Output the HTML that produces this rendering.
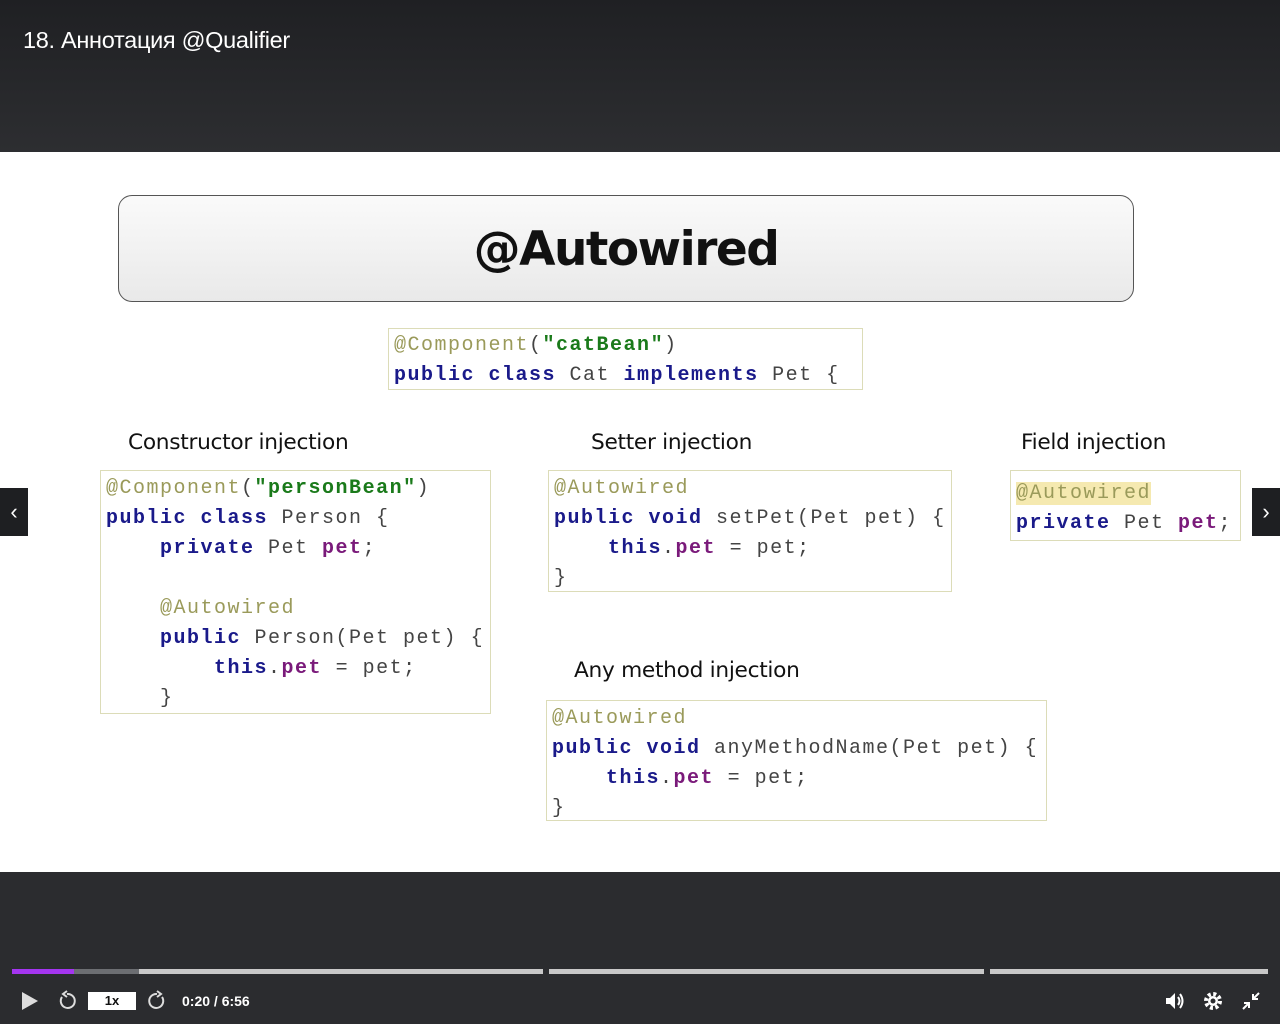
<!DOCTYPE html>
<html><head><meta charset="utf-8"><style>
*{margin:0;padding:0;box-sizing:border-box}
body{width:1280px;height:1024px;background:#2b2c2f;position:relative;overflow:hidden;font-family:"Liberation Sans",sans-serif}
.top{position:absolute;left:0;top:0;width:1280px;height:152px;background:linear-gradient(#1f2023,#2d2e31)}
.title{position:absolute;left:23px;top:27px;color:#fff;font-size:23.5px;letter-spacing:-0.3px;font-weight:normal}
.slide{position:absolute;left:0;top:152px;width:1280px;height:720px;background:#fff}
.hdr{position:absolute;left:118px;top:195px;width:1016px;height:107px;border:1.5px solid #555;border-radius:14px;background:linear-gradient(#fafafa,#e9e9e9);text-align:center;font:bold 47px/107px "DejaVu Sans","Liberation Sans",sans-serif;color:#111;letter-spacing:-1.5px}
.code{position:absolute;border:1.5px solid #dcdcb8;background:#fff;font-family:"Liberation Mono",monospace;font-size:20px;line-height:30px;letter-spacing:1.5px;color:#444;white-space:pre;padding:3px 0 0 5px}
.a{color:#9a9a5a}.k{color:#1a1a8a;font-weight:bold}.s{color:#1a7a1a;font-weight:bold}.p{color:#7a1a7a;font-weight:bold}
.lbl{position:absolute;color:#111;font-family:"DejaVu Sans","Liberation Sans",sans-serif;font-size:21.7px;letter-spacing:-0.3px}
.nav{position:absolute;top:488px;width:28px;height:48px;background:#1e1f22;color:#fff;font-size:22px;text-align:center;line-height:48px}
.bar{position:absolute;top:969px;height:5px;background:#c8c8c8}
.ctl{position:absolute;color:#fff}
</style></head><body>
<div class="top"><div class="title">18. Аннотация @Qualifier</div></div>
<div class="slide"></div>
<div class="hdr">@Autowired</div>
<div class="code" style="left:388px;top:328px;width:475px;height:62px;padding-top:2px"><span class="a">@Component</span>(<span class="s">"catBean"</span>)
<span class="k">public class</span> Cat <span class="k">implements</span> Pet {</div>
<div class="lbl" style="left:128px;top:430px">Constructor injection</div>
<div class="lbl" style="left:591px;top:430px">Setter injection</div>
<div class="lbl" style="left:1021px;top:430px">Field injection</div>
<div class="lbl" style="left:574px;top:658px">Any method injection</div>
<div class="code" style="left:100px;top:470px;width:391px;height:244px"><span class="a">@Component</span>(<span class="s">"personBean"</span>)
<span class="k">public class</span> Person {
    <span class="k">private</span> Pet <span class="p">pet</span>;

    <span class="a">@Autowired</span>
    <span class="k">public</span> Person(Pet pet) {
        <span class="k">this</span>.<span class="p">pet</span> = pet;
    }</div>
<div class="code" style="left:548px;top:470px;width:404px;height:122px"><span class="a">@Autowired</span>
<span class="k">public void</span> setPet(Pet pet) {
    <span class="k">this</span>.<span class="p">pet</span> = pet;
}</div>
<div class="code" style="left:1010px;top:470px;width:231px;height:71px;padding-top:8px"><span class="a" style="background:#f5e9b0">@Autowired</span>
<span class="k">private</span> Pet <span class="p">pet</span>;</div>
<div class="code" style="left:546px;top:700px;width:501px;height:121px"><span class="a">@Autowired</span>
<span class="k">public void</span> anyMethodName(Pet pet) {
    <span class="k">this</span>.<span class="p">pet</span> = pet;
}</div>
<div class="nav" style="left:0">‹</div>
<div class="nav" style="left:1252px">›</div>
<div class="bar" style="left:12px;width:531px"></div>
<div class="bar" style="left:12px;width:127px;background:#6c6e72"></div>
<div class="bar" style="left:12px;width:62px;background:#a435f0"></div>
<div class="bar" style="left:549px;width:435px"></div>
<div class="bar" style="left:990px;width:278px"></div>
<svg class="ctl" style="left:20px;top:990px" width="20" height="22"><path d="M2 2L18 11L2 20Z" fill="#ddd"/></svg>
<svg class="ctl" style="left:57px;top:990px" width="20" height="22" fill="none" stroke="#ddd" stroke-width="2"><path d="M5 7A7 7 0 1 0 10 4"/><path d="M10 1L6 4L10 7"/></svg>
<div class="ctl" style="left:88px;top:992px;width:48px;height:18px;background:#fff;color:#111;font:bold 13px/18px 'Liberation Sans';text-align:center">1x</div>
<svg class="ctl" style="left:147px;top:990px" width="20" height="22" fill="none" stroke="#ddd" stroke-width="2"><path d="M15 7A7 7 0 1 1 10 4"/><path d="M10 1L14 4L10 7"/></svg>
<div class="ctl" style="left:182px;top:992px;font:bold 14px/18px 'Liberation Sans'">0:20 / 6:56</div>
<svg class="ctl" style="left:1164px;top:990px" width="22" height="22"><path d="M2 8H6L11 3V19L6 14H2Z" fill="#fff"/><path d="M14 7Q17 11 14 15M16 4Q21 11 16 18" stroke="#fff" stroke-width="2" fill="none"/></svg>
<svg class="ctl" style="left:1202px;top:990px" width="22" height="22"><circle cx="11" cy="11" r="7" fill="none" stroke="#fff" stroke-width="4" stroke-dasharray="3 2.5"/><circle cx="11" cy="11" r="5" fill="#fff"/><circle cx="11" cy="11" r="2.5" fill="#2b2c2f"/></svg>
<svg class="ctl" style="left:1241px;top:991px" width="20" height="20" stroke="#fff" stroke-width="2" fill="none"><path d="M18 2L12 8M12 3V8H17M2 18L8 12M3 12H8V17"/></svg>
</body></html>
